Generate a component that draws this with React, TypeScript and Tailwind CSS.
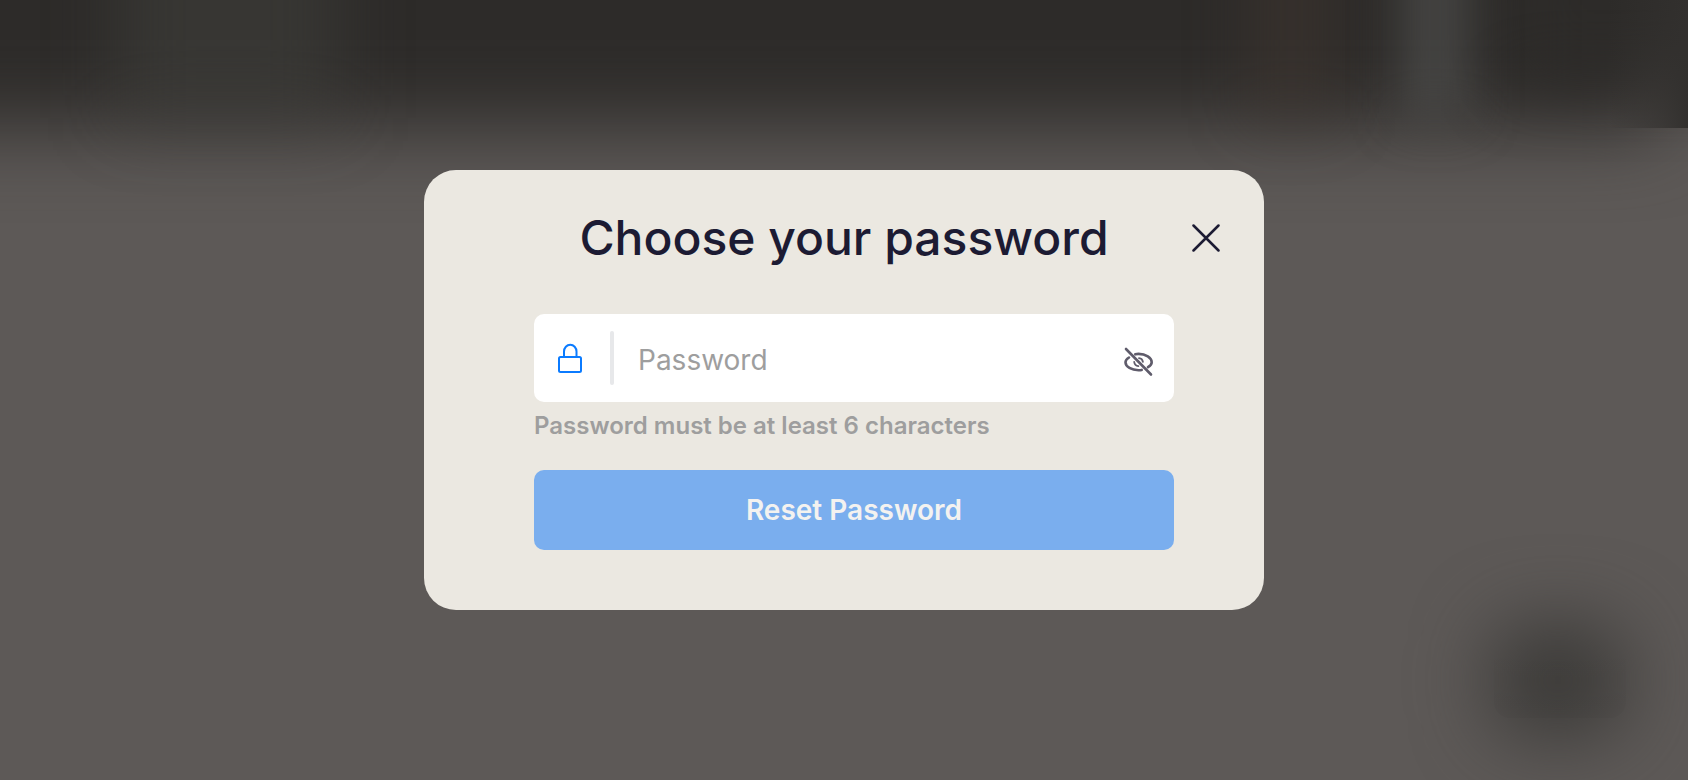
import React, { useState } from 'react';

function LockIcon() {
  return (
    <svg width="24" height="30" viewBox="0 0 24 30" fill="none" stroke="#0b7bff" strokeWidth="2" aria-hidden="true">
      <rect x="1" y="14" width="22" height="15" rx="1.500" />
      <path d="M6 14V8.500a6 6.500 0 0 1 12.500 0V14" />
    </svg>
  );
}

function EyeOffIcon() {
  return (
    <svg width="30" height="30" viewBox="0 0 30 30" fill="none" stroke="#5f5c6b" strokeWidth="2.600" strokeLinecap="round" aria-hidden="true">
      <path d="M2 2L27 27.500" />
      <path d="M5 10.500C3 11.800 1.500 13.300 1.500 15.300C1.500 19.900 7.600 23.200 14.500 23.200C15.800 23.200 16.700 23.100 17.700 22.900" />
      <path d="M11.300 7.300C12.300 7 13.400 6.900 14.500 6.900C21.700 6.900 27.700 10.600 27.700 15.300C27.700 17.200 26.300 18.800 24 20.200" />
      <path d="M10.200 15C10.500 17.200 12.200 18.900 14.400 19.200" strokeWidth="1.800" />
      <path d="M15 11.200C17 11.400 18.600 12.900 18.900 14.900" strokeWidth="1.800" />
    </svg>
  );
}

function CloseIcon() {
  return (
    <svg width="28" height="28" viewBox="0 0 28 28" fill="none" stroke="#1c1b33" strokeWidth="2.500" strokeLinecap="round" aria-hidden="true">
      <path d="M1.500 1.500L26.500 26.500M26.500 1.500L1.500 26.500" />
    </svg>
  );
}

function Backdrop() {
  return (
    <div className="absolute inset-0 overflow-hidden bg-[#5d5957]" aria-hidden="true">
      <div className="absolute -top-28 right-6 -left-28 h-[240px] bg-[#2d2b29] blur-[40px]" />
      <div className="absolute -top-28 -right-28 h-48 w-72 bg-[#2d2b29] blur-[34px]" />
      <div className="absolute -top-28 left-[7%] h-[230px] w-[13%] bg-[#42413e]/50 blur-[34px]" />
      <div className="absolute -top-28 left-[74%] h-[230px] w-[5%] bg-[#403630]/50 blur-[30px]" />
      <div className="absolute -top-28 left-[83%] h-[230px] w-[4%] bg-[#50504e]/70 blur-[24px]" />
      <div className="absolute top-0 right-0 h-32 w-20 bg-linear-to-r from-transparent to-[#32302e]" />
      <div className="absolute right-[62px] bottom-[42px] h-[116px] w-[136px] rounded-[40px] bg-[#383735]/90 blur-[38px]" />
      <div className="absolute right-[62px] bottom-[62px] h-[76px] w-[132px] rounded-2xl bg-linear-to-b from-transparent to-black/3" />
    </div>
  );
}

export default function App() {
  const [password, setPassword] = useState('');
  const [visible, setVisible] = useState(false);

  return (
    <div className="relative flex min-h-screen items-center justify-center font-['Inter',sans-serif]">
      <Backdrop />

      <section
        role="dialog"
        aria-labelledby="dialog-title"
        className="relative w-full max-w-[840px] rounded-4xl bg-[#ebe8e1] pt-9 pb-[60px]"
      >
        <header className="grid grid-cols-[1fr_auto_1fr] items-center px-11">
          <h1 id="dialog-title" className="col-start-2 text-5xl leading-16 font-medium text-[#1c1b33]">
            Choose your password
          </h1>
          <button type="button" aria-label="Close" className="justify-self-end">
            <CloseIcon />
          </button>
        </header>

        <form className="mt-11 pr-[90px] pl-[110px]" onSubmit={(e) => e.preventDefault()}>
          <div className="flex h-[88px] items-center rounded-[10px] bg-white pr-5 pl-6">
            <LockIcon />
            <span className="ml-7 h-[54px] w-1 rounded-full bg-[#e7e8ea]" />
            <input
              type={visible ? 'text' : 'password'}
              value={password}
              onChange={(e) => setPassword(e.target.value)}
              placeholder="Password"
              aria-label="Password"
              aria-describedby="password-hint"
              className="mx-6 h-full min-w-0 flex-1 bg-transparent pt-1 text-[28px] text-[#1c1b33] outline-none placeholder:text-[#9e9e9e]"
            />
            <button
              type="button"
              aria-label="Toggle password visibility"
              className="pt-2"
              onClick={() => setVisible(!visible)}
            >
              <EyeOffIcon />
            </button>
          </div>
          <p id="password-hint" className="mt-2 text-2xl leading-8 font-semibold text-[#9e9e9e]">
            Password must be at least 6 characters
          </p>
          <button
            type="submit"
            className="mt-7 h-20 w-full rounded-[10px] bg-[#7aaeee] text-[28px] font-semibold text-[#f3f2f0]"
          >
            Reset Password
          </button>
        </form>
      </section>
    </div>
  );
}
